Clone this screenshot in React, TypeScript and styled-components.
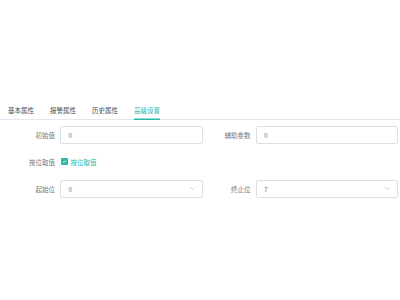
import React from 'react';
import styled, { createGlobalStyle } from 'styled-components';
import { ChevronDown } from 'lucide-react';

const accent = '#2ab8a8';

const GlobalStyle = createGlobalStyle`
  body {
    margin: 0;
    background: #fff;
    font-family: "Noto Sans CJK SC", "Noto Sans", sans-serif;
  }
`;

const Page = styled.div`
  padding-top: 100px;
  width: 400px;
`;

const TabNav = styled.div`
  display: flex;
  align-items: flex-end;
  gap: 16px;
  padding-left: 8px;
  border-bottom: 1px solid #e4e7ed;
`;

const Tab = styled.div<{ $active?: boolean }>`
  height: 20px;
  line-height: 20px;
  margin-bottom: -1px;
  font-size: 6.5px;
  color: ${(p) => (p.$active ? accent : '#4a4c52')};
  box-shadow: ${(p) => (p.$active ? `inset 0 -1.5px 0 ${accent}` : 'none')};
`;

const Form = styled.div`
  display: grid;
  grid-template-columns: 60px 1fr 53px 1fr;
  grid-auto-rows: 18px;
  row-gap: 9px;
  padding: 5.5px 2px 0 0;
`;

const Label = styled.div`
  display: flex;
  align-items: center;
  justify-content: flex-end;
  padding-right: 5px;
  font-size: 6.5px;
  color: #76787e;
`;

const Field = styled.div`
  display: flex;
  align-items: center;
  box-sizing: border-box;
  height: 18px;
  padding: 0 5px 0 7.5px;
  border: 1px solid #dcdfe6;
  border-radius: 2px;
  font-size: 6.5px;
  color: #76787e;
`;

const Value = styled.span`
  flex: 1;
`;

const CheckRow = styled.div`
  grid-column: 2 / 5;
  display: flex;
  align-items: center;
  gap: 3px;
  padding-left: 0.5px;
  font-size: 6.5px;
  color: ${accent};
`;

const Box = styled.span`
  display: flex;
  align-items: center;
  justify-content: center;
  width: 7px;
  height: 7px;
  border-radius: 1px;
  background: ${accent};
`;

const tabs = ['基本属性', '报警属性', '历史属性', '高级设置'];

function Select({ value }: { value: string }) {
  return (
    <Field>
      <Value>{value}</Value>
      <ChevronDown size={9} color="#b4b8c0" strokeWidth={1.6} />
    </Field>
  );
}

export default function App() {
  return (
    <Page>
      <GlobalStyle />
      <TabNav>
        {tabs.map((t, i) => (
          <Tab key={t} $active={i === 3}>
            {t}
          </Tab>
        ))}
      </TabNav>
      <Form>
        <Label>初始值</Label>
        <Field>0</Field>
        <Label>辅助参数</Label>
        <Field>0</Field>

        <Label>按位取值</Label>
        <CheckRow>
          <Box>
            <svg width="5" height="5" viewBox="0 0 10 10">
              <path d="M2 5.2 L4.2 7.3 L8 2.8" fill="none" stroke="#fff" strokeWidth="1.6" />
            </svg>
          </Box>
          按位取值
        </CheckRow>

        <Label>起始位</Label>
        <Select value="0" />
        <Label>终止位</Label>
        <Select value="7" />
      </Form>
    </Page>
  );
}
